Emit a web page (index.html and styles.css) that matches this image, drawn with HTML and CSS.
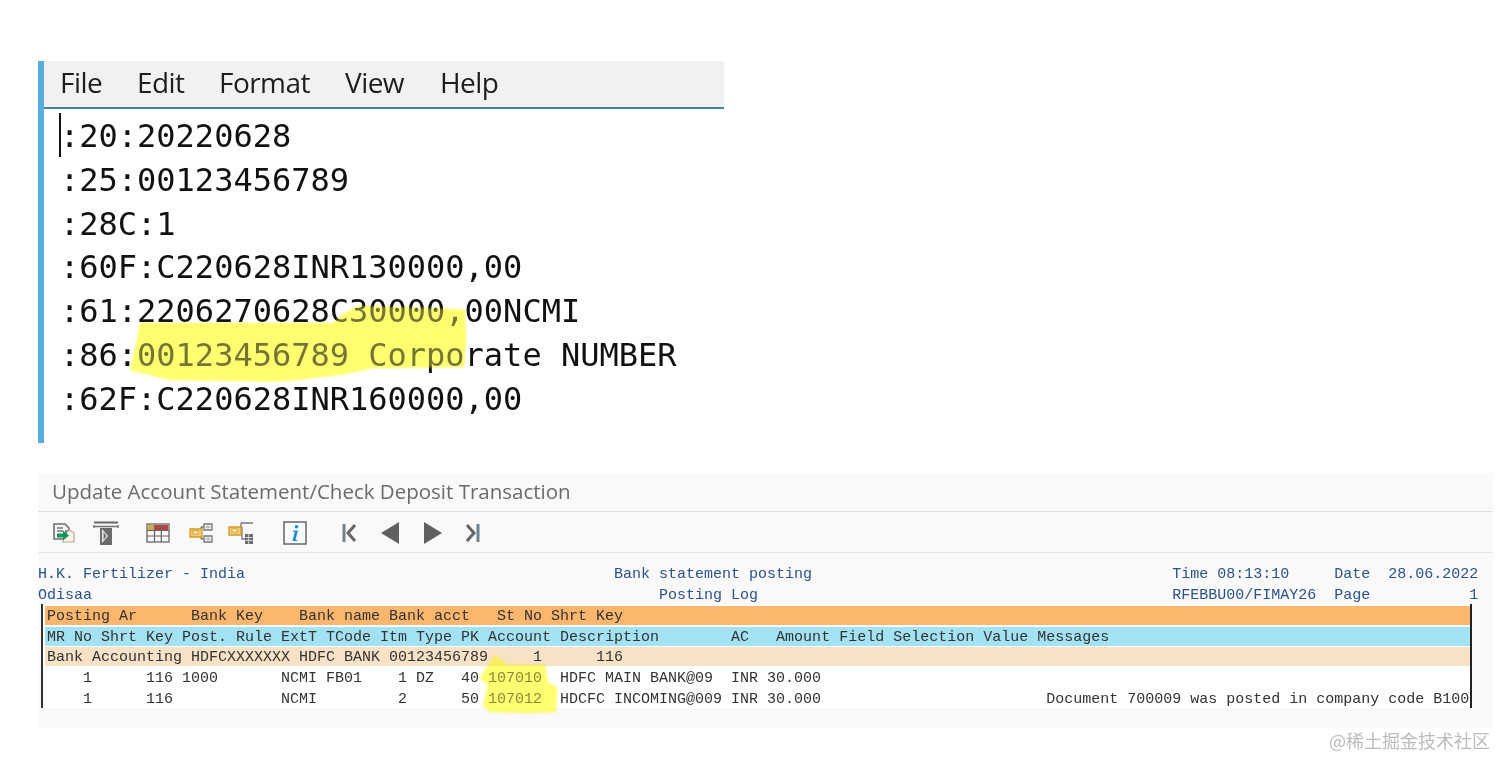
FILE: index.html
```html
<!DOCTYPE html>
<html lang="en">
<head>
<meta charset="utf-8">
<title>Update Account Statement</title>
<link rel="stylesheet" href="styles.css">
</head>
<body>
<section class="notepad">
  <nav class="menu"><span class="m-file">File</span><span class="m-edit">Edit</span><span class="m-format">Format</span><span class="m-view">View</span><span>Help</span></nav>
  <div class="editor">
    <div class="caret"></div>
    <pre class="swift">:20:20220628
:25:00123456789
:28C:1
:60F:C220628INR130000,00
:61:2206270628C30000,00NCMI
:86:00123456789 Corporate NUMBER
:62F:C220628INR160000,00</pre>
  </div>
</section>

<section class="sap">
  <h1 class="sap-title">Update Account Statement/Check Deposit Transaction</h1>
  <div class="toolbar">
    <svg class="ic i-doc" width="26" height="24" viewBox="0 0 26 24"><path d="M3 3h11l4 4v3H15v8H3z" fill="#f4f4f4" stroke="#6d6d6d" stroke-width="1.6"/><path d="M6 7h6M6 10h6" stroke="#777" stroke-width="1.3"/><path d="M18 9l5 3v9H12v-2" fill="#f7f3ea" stroke="#b9a98f" stroke-width="1.2"/><path d="M6 12.5h6V9.5l6 5-6 5v-3H6z" fill="#12955a"/></svg>
    <svg class="ic i-funnel" width="26" height="26" viewBox="0 0 26 26"><path d="M1 2.500h24" stroke="#666" stroke-width="2"/><path d="M1 6.500h24" stroke="#777" stroke-width="1.6"/><path d="M1 5v3M25 5v3" stroke="#777" stroke-width="1.500"/><path d="M7 8h12v17H7z" fill="#6b6b6b"/><path d="M9 9l6 7-6 7z" fill="#f1f1f1"/><path d="M10.500 12l3 4-3 4z" fill="#6b6b6b"/></svg>
    <svg class="ic i-grid" width="24" height="20" viewBox="0 0 24 20"><rect x="1" y="1" width="22" height="18" fill="#f7f7f7" stroke="#666" stroke-width="1.300"/><rect x="2" y="2" width="6.500" height="5" fill="#d6a94a"/><rect x="8.500" y="2" width="6.500" height="5" fill="#b8413e"/><rect x="15" y="2" width="7" height="5" fill="#b8413e"/><path d="M1 7.500h22M1 13h22M8.500 2v17M15.300 2v17" stroke="#666" stroke-width="1.200"/></svg>
    <svg class="ic i-tree" width="24" height="22" viewBox="0 0 24 22"><path d="M15 2h8v6h-8zM15 14h8v6h-8zM12 5h3M12 17h3M12 5v12" fill="none" stroke="#777" stroke-width="1.300"/><path d="M15 5h8M19 2v6M15 17h8M19 14v6" stroke="#999" stroke-width=".8"/><path d="M1 7h12v8H1z" fill="#f2cd6e" stroke="#d39a24" stroke-width="1.300"/><rect x="4" y="9" width="5" height="3" fill="#fbf2cf" stroke="#c58f25" stroke-width=".7"/></svg>
    <svg class="ic i-tree2" width="26" height="24" viewBox="0 0 26 24"><path d="M13 2h12M13 2v4M14 6v12h3M14 6h-1" fill="none" stroke="#777" stroke-width="1.300"/><path d="M1 6h12v8H1z" fill="#f2cd6e" stroke="#d39a24" stroke-width="1.300"/><rect x="4" y="8" width="5" height="3" fill="#fbf2cf" stroke="#c58f25" stroke-width=".7"/><rect x="17" y="13" width="8" height="10" fill="#6d6d6d"/><path d="M17.500 16.500h7M20.700 13v10M17.500 19.500h7" stroke="#dcdcdc" stroke-width=".9"/></svg>
    <svg class="ic i-info" width="24" height="24" viewBox="0 0 24 24"><rect x="1" y="1" width="22" height="22" fill="#f8fcff" stroke="#666" stroke-width="1.500"/><circle cx="13.500" cy="5.800" r="1.800" fill="#1590d0"/><path d="M10 9.500h5l-2.300 8.500q-.3 1.300 1.600.8l-.3 1.200H9.500l2.300-9.200H9.800z" fill="#1590d0"/></svg>
    <svg class="ic i-first" width="16" height="20" viewBox="0 0 16 20"><path d="M3 1v18" stroke="#6f8091" stroke-width="3"/><path d="M14 2l-7 8 7 8" fill="none" stroke="#666" stroke-width="3"/></svg>
    <svg class="ic i-prev" width="18" height="22" viewBox="0 0 18 22"><path d="M0 11L18 0v22z" fill="#606060"/></svg>
    <svg class="ic i-next" width="18" height="22" viewBox="0 0 18 22"><path d="M18 11L0 0v22z" fill="#606060"/></svg>
    <svg class="ic i-last" width="15" height="20" viewBox="0 0 15 20"><path d="M12 1v18" stroke="#6f8091" stroke-width="3"/><path d="M1 2l7 8-7 8" fill="none" stroke="#666" stroke-width="3"/></svg>
  </div>
  <div class="report">
    <pre class="row meta">H.K. Fertilizer - India                                         Bank statement posting                                        Time 08:13:10     Date  28.06.2022</pre>
    <pre class="row meta">Odisaa                                                               Posting Log                                              RFEBBU00/FIMAY26  Page           1</pre>
    <div class="table">
      <pre class="row band orange">Posting Ar      Bank Key    Bank name Bank acct   St No Shrt Key</pre>
      <pre class="row band blue">MR No Shrt Key Post. Rule ExtT TCode Itm Type PK Account Description        AC   Amount Field Selection Value Messages</pre>
      <pre class="row band peach">Bank Accounting HDFCXXXXXXX HDFC BANK 00123456789     1      116</pre>
      <pre class="row band white">    1      116 1000       NCMI FB01    1 DZ   40 107010  HDFC MAIN BANK@09  INR 30.000</pre>
      <pre class="row band white">    1      116            NCMI         2      50 107012  HDCFC INCOMING@009 INR 30.000                         Document 700009 was posted in company code B100</pre>
    </div>
  </div>
</section>

<svg class="marker" width="1512" height="773" viewBox="0 0 1512 773" aria-hidden="true">
  <path d="M140 323 L333 323 Q345 311 360 306 L453 309 L465 310 L466 340 L464 367 L373 368 Q345 375 320 377 Q280 383 253 381 L170 380 L130 370 L137 340 Z"/>
  <path d="M495 655 L507 665 L545 665 L548 683 L557 687 L556 712 L530 713 L490 712 L483 705 L488 685 L480 678 Z"/>
</svg>
<svg class="marker marker-veil" width="1512" height="773" viewBox="0 0 1512 773" aria-hidden="true">
  <path d="M140 323 L333 323 Q345 311 360 306 L453 309 L465 310 L466 340 L464 367 L373 368 Q345 375 320 377 Q280 383 253 381 L170 380 L130 370 L137 340 Z"/>
  <path d="M495 655 L507 665 L545 665 L548 683 L557 687 L556 712 L530 713 L490 712 L483 705 L488 685 L480 678 Z"/>
</svg>
<div class="watermark">@稀土掘金技术社区</div>
</body>
</html>
```

FILE: styles.css
```css
* { box-sizing: border-box; }
html, body { margin: 0; padding: 0; background: #fff; }
body { width: 1512px; height: 773px; padding: 61px 0 0 38px; overflow: hidden; position: relative; }
pre { margin: 0; }

.notepad { width: 686px; height: 382px; border-left: 6px solid #55aede; background: #fff; }
.menu { height: 48px; background: #f1f1f1; border-bottom: 2px solid #3f7fa8; display: flex; align-items: center; padding-left: 16px; padding-bottom: 4px; font: 28px/1 "Open Sans", sans-serif; color: #1e1e1e; letter-spacing: -.55px; filter: blur(.3px); }
.menu span { display: block; }
.m-file { width: 77px; }
.m-edit { width: 82px; }
.m-format { width: 126px; }
.m-view { width: 95px; }

.editor { display: flex; padding: 6px 0 0 15px; }
.caret { width: 2px; height: 44px; background: #111; margin-top: -2px; }
.swift { margin-left: -1px; font: 32px/43.8px "DejaVu Sans Mono", monospace; color: #111; filter: blur(.35px); }

.sap { width: 1455px; height: 255px; margin-top: 30px; background: #f9f9f9; }
.sap-title { margin: 0; height: 39px; padding: 6px 0 0 14px; font: 400 20.500px/24px "Open Sans", sans-serif; color: #6b6b6b; border-bottom: 1px solid #dedede; filter: blur(.3px); }
.toolbar { height: 41px; border-bottom: 1px solid #e4e4e4; display: flex; align-items: center; padding: 2px 0 0 13px; }
.ic { display: block; flex: none; }
.i-funnel { margin-left: 16px; }
.i-grid { margin-left: 27px; }
.i-tree { margin-left: 19px; }
.i-tree2 { margin-left: 15px; }
.i-info { margin-left: 29px; }
.i-first { margin-left: 34px; }
.i-prev { margin-left: 24px; }
.i-next { margin-left: 25px; }
.i-last { margin-left: 24px; }

.report { padding-top: 12px; font: 15px/18.500px "Liberation Mono", monospace; color: #333; filter: blur(.3px); }
.row { height: 20.600px; line-height: 20.600px; font: inherit; white-space: pre; }
.meta { color: #2b5289; line-height: 20.600px; }
.table { margin-left: 3px; width: 1431px; height: 104px; margin-top: -2px; padding: 2px 0 0 2px; background: #fff; border-left: 2px solid #333; border-right: 2px solid #222; }
.band { height: 19px; margin-bottom: 1.600px; line-height: 21px; padding-left: 2px; }
.orange { background: #fcb66e; }
.blue { background: #a3e2f3; }
.peach { background: #f7e2c6; }
.white { background: #fff; }

.marker { position: absolute; left: 0; top: 0; mix-blend-mode: multiply; pointer-events: none; fill: #ffff70; filter: blur(1.2px); }
.marker-veil { mix-blend-mode: normal; opacity: .42; }
.watermark { position: absolute; right: 22px; top: 728px; font: 18px/24px "Noto Sans CJK SC", sans-serif; color: #bcbcbc; }
```
